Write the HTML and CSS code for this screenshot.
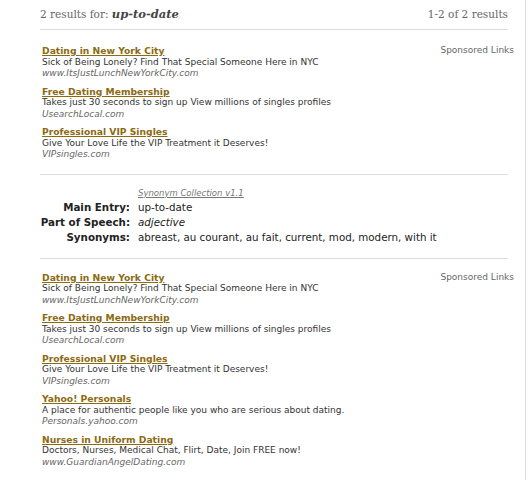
FILE: index.html
```html
<!DOCTYPE html>
<html lang="en">
<head>
    <meta charset="UTF-8">
    <title>up-to-date - Search Results</title>
    <link rel="stylesheet" href="styles.css">
</head>
<body>
    <div class="page">
        <div class="results-head">
            <span>2 results for: <strong>up-to-date</strong></span>
            <span>1-2 of 2 results</span>
        </div>

        <div class="sponsored">
            <div class="ads">
                <div class="ad">
                    <a href="#">Dating in New York City</a>
                    <p>Sick of Being Lonely? Find That Special Someone Here in NYC</p>
                    <em>www.ItsJustLunchNewYorkCity.com</em>
                </div>
                <div class="ad">
                    <a href="#">Free Dating Membership</a>
                    <p>Takes just 30 seconds to sign up View millions of singles profiles</p>
                    <em>UsearchLocal.com</em>
                </div>
                <div class="ad">
                    <a href="#">Professional VIP Singles</a>
                    <p>Give Your Love Life the VIP Treatment it Deserves!</p>
                    <em>VIPsingles.com</em>
                </div>
            </div>
            <span class="label">Sponsored Links</span>
        </div>

        <div class="entry">
            <a class="source" href="#">Synonym Collection v1.1</a>
            <div class="row"><span class="key">Main Entry:</span><span>up-to-date</span></div>
            <div class="row"><span class="key">Part of Speech:</span><span class="pos">adjective</span></div>
            <div class="row"><span class="key">Synonyms:</span><span>abreast, au courant, au fait, current, mod, modern, with it</span></div>
        </div>

        <div class="sponsored">
            <div class="ads">
                <div class="ad">
                    <a href="#">Dating in New York City</a>
                    <p>Sick of Being Lonely? Find That Special Someone Here in NYC</p>
                    <em>www.ItsJustLunchNewYorkCity.com</em>
                </div>
                <div class="ad">
                    <a href="#">Free Dating Membership</a>
                    <p>Takes just 30 seconds to sign up View millions of singles profiles</p>
                    <em>UsearchLocal.com</em>
                </div>
                <div class="ad">
                    <a href="#">Professional VIP Singles</a>
                    <p>Give Your Love Life the VIP Treatment it Deserves!</p>
                    <em>VIPsingles.com</em>
                </div>
                <div class="ad">
                    <a href="#">Yahoo! Personals</a>
                    <p>A place for authentic people like you who are serious about dating.</p>
                    <em>Personals.yahoo.com</em>
                </div>
                <div class="ad">
                    <a href="#">Nurses in Uniform Dating</a>
                    <p>Doctors, Nurses, Medical Chat, Flirt, Date, Join FREE now!</p>
                    <em>www.GuardianAngelDating.com</em>
                </div>
            </div>
            <span class="label">Sponsored Links</span>
        </div>
    </div>
</body>
</html>
```

FILE: styles.css
```css
body {
    margin: 0;
    background-color: #fff;
    font-family: "DejaVu Sans", Verdana, sans-serif;
}

.page {
    width: 526px;
    min-height: 100vh;
    border-right: 1px solid #dcdcdc;
    box-sizing: border-box;
    padding: 0 17px 0 40px;
}

.results-head {
    display: flex;
    justify-content: space-between;
    align-items: center;
    height: 30px;
    padding-bottom: 2px;
    box-sizing: border-box;
    font-family: "DejaVu Serif", Georgia, serif;
    font-size: 10.5px;
    color: #666;
    border-bottom: 1px solid #ddd;
}

.results-head strong {
    font-size: 11.5px;
    font-style: italic;
    color: #444;
}

.sponsored {
    display: flex;
    justify-content: space-between;
    align-items: flex-start;
    padding: 15px 0 13px 2px;
    border-bottom: 1px solid #ddd;
}

.sponsored:last-child {
    border-bottom: none;
    padding-top: 13px;
}

.ad {
    font-size: 9px;
    line-height: 11.5px;
    margin-bottom: 6px;
}

.ad:last-child {
    margin-bottom: 0;
}

.ad a {
    display: block;
    width: fit-content;
    font-size: 9.2px;
    font-weight: bold;
    color: #8c6a12;
    text-decoration: underline;
}

.ad p {
    margin: 0;
    color: #333;
}

.ad em {
    display: block;
    color: #666;
}

.label {
    font-size: 9px;
    line-height: 11.5px;
    color: #666;
    margin-right: -6px;
}

.entry {
    padding: 11px 0 13px;
    border-bottom: 1px solid #ddd;
    font-size: 10.3px;
    line-height: 15px;
    color: #222;
}

.entry .source {
    display: block;
    margin-left: 98px;
    font-size: 8.5px;
    line-height: 14px;
    font-style: italic;
    color: #777;
}

.row {
    display: flex;
    gap: 8px;
}

.row .key {
    width: 90px;
    display: flex;
    justify-content: flex-end;
    white-space: nowrap;
    font-weight: bold;
    flex-shrink: 0;
}

.row .pos {
    font-style: italic;
}
```
